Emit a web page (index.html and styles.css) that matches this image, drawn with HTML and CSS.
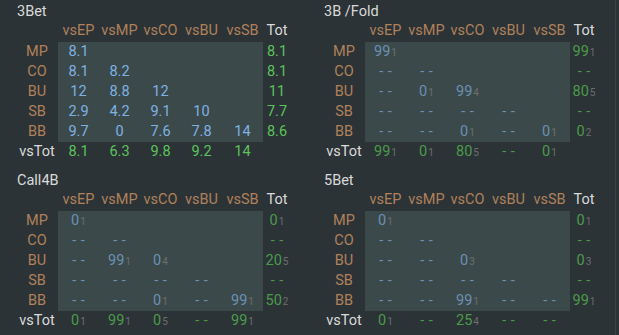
FILE: index.html
```html
<!DOCTYPE html>
<html>
<head>
<meta charset="utf-8">
<link rel="stylesheet" href="styles.css">
</head>
<body>
<div class="page">
  <div class="panels">
    <section class="panel hi">
      <div class="title">3Bet</div>
      <div class="grid">
        <div></div><div class="h">vsEP</div><div class="h">vsMP</div><div class="h">vsCO</div><div class="h">vsBU</div><div class="h">vsSB</div><div class="w">Tot</div>
        <div class="l">MP</div><div class="in b">8.1</div><div class="in"></div><div class="in"></div><div class="in"></div><div class="in"></div><div class="g">8.1</div>
        <div class="l">CO</div><div class="in b">8.1</div><div class="in b">8.2</div><div class="in"></div><div class="in"></div><div class="in"></div><div class="g">8.1</div>
        <div class="l">BU</div><div class="in b">12</div><div class="in b">8.8</div><div class="in b">12</div><div class="in"></div><div class="in"></div><div class="g">11</div>
        <div class="l">SB</div><div class="in b">2.9</div><div class="in b">4.2</div><div class="in b">9.1</div><div class="in b">10</div><div class="in"></div><div class="g">7.7</div>
        <div class="l">BB</div><div class="in b">9.7</div><div class="in b">0</div><div class="in b">7.6</div><div class="in b">7.8</div><div class="in b">14</div><div class="g">8.6</div>
        <div class="w">vsTot</div><div class="g">8.1</div><div class="g">6.3</div><div class="g">9.8</div><div class="g">9.2</div><div class="g">14</div><div></div>
      </div>
    </section>
    <section class="panel">
      <div class="title">3B /Fold</div>
      <div class="grid">
        <div></div><div class="h">vsEP</div><div class="h">vsMP</div><div class="h">vsCO</div><div class="h">vsBU</div><div class="h">vsSB</div><div class="w">Tot</div>
        <div class="l">MP</div><div class="in b">99<sub>1</sub></div><div class="in"></div><div class="in"></div><div class="in"></div><div class="in"></div><div class="g">99<sub>1</sub></div>
        <div class="l">CO</div><div class="in b d">--</div><div class="in b d">--</div><div class="in"></div><div class="in"></div><div class="in"></div><div class="g d">--</div>
        <div class="l">BU</div><div class="in b d">--</div><div class="in b">0<sub>1</sub></div><div class="in b">99<sub>4</sub></div><div class="in"></div><div class="in"></div><div class="g">80<sub>5</sub></div>
        <div class="l">SB</div><div class="in b d">--</div><div class="in b d">--</div><div class="in b d">--</div><div class="in b d">--</div><div class="in"></div><div class="g d">--</div>
        <div class="l">BB</div><div class="in b d">--</div><div class="in b d">--</div><div class="in b">0<sub>1</sub></div><div class="in b d">--</div><div class="in b">0<sub>1</sub></div><div class="g">0<sub>2</sub></div>
        <div class="w">vsTot</div><div class="g">99<sub>1</sub></div><div class="g">0<sub>1</sub></div><div class="g">80<sub>5</sub></div><div class="g d">--</div><div class="g">0<sub>1</sub></div><div></div>
      </div>
    </section>
    <section class="panel">
      <div class="title">Call4B</div>
      <div class="grid">
        <div></div><div class="h">vsEP</div><div class="h">vsMP</div><div class="h">vsCO</div><div class="h">vsBU</div><div class="h">vsSB</div><div class="w">Tot</div>
        <div class="l">MP</div><div class="in b">0<sub>1</sub></div><div class="in"></div><div class="in"></div><div class="in"></div><div class="in"></div><div class="g">0<sub>1</sub></div>
        <div class="l">CO</div><div class="in b d">--</div><div class="in b d">--</div><div class="in"></div><div class="in"></div><div class="in"></div><div class="g d">--</div>
        <div class="l">BU</div><div class="in b d">--</div><div class="in b">99<sub>1</sub></div><div class="in b">0<sub>4</sub></div><div class="in"></div><div class="in"></div><div class="g">20<sub>5</sub></div>
        <div class="l">SB</div><div class="in b d">--</div><div class="in b d">--</div><div class="in b d">--</div><div class="in b d">--</div><div class="in"></div><div class="g d">--</div>
        <div class="l">BB</div><div class="in b d">--</div><div class="in b d">--</div><div class="in b">0<sub>1</sub></div><div class="in b d">--</div><div class="in b">99<sub>1</sub></div><div class="g">50<sub>2</sub></div>
        <div class="w">vsTot</div><div class="g">0<sub>1</sub></div><div class="g">99<sub>1</sub></div><div class="g">0<sub>5</sub></div><div class="g d">--</div><div class="g">99<sub>1</sub></div><div></div>
      </div>
    </section>
    <section class="panel">
      <div class="title">5Bet</div>
      <div class="grid">
        <div></div><div class="h">vsEP</div><div class="h">vsMP</div><div class="h">vsCO</div><div class="h">vsBU</div><div class="h">vsSB</div><div class="w">Tot</div>
        <div class="l">MP</div><div class="in b">0<sub>1</sub></div><div class="in"></div><div class="in"></div><div class="in"></div><div class="in"></div><div class="g">0<sub>1</sub></div>
        <div class="l">CO</div><div class="in b d">--</div><div class="in b d">--</div><div class="in"></div><div class="in"></div><div class="in"></div><div class="g d">--</div>
        <div class="l">BU</div><div class="in b d">--</div><div class="in b d">--</div><div class="in b">0<sub>3</sub></div><div class="in"></div><div class="in"></div><div class="g">0<sub>3</sub></div>
        <div class="l">SB</div><div class="in b d">--</div><div class="in b d">--</div><div class="in b d">--</div><div class="in b d">--</div><div class="in"></div><div class="g d">--</div>
        <div class="l">BB</div><div class="in b d">--</div><div class="in b d">--</div><div class="in b">99<sub>1</sub></div><div class="in b d">--</div><div class="in b d">--</div><div class="g">99<sub>1</sub></div>
        <div class="w">vsTot</div><div class="g">0<sub>1</sub></div><div class="g d">--</div><div class="g">25<sub>4</sub></div><div class="g d">--</div><div class="g d">--</div><div></div>
      </div>
    </section>
  </div>
  <div class="edge"></div>
</div>
</body>
</html>
```

FILE: styles.css
```css
html, body {
  margin: 0;
  padding: 0;
  background: #2b3336;
  height: 100%;
  overflow: hidden;
}
.page {
  display: flex;
  height: 100%;
  font-family: Roboto, "Liberation Sans", sans-serif;
  font-size: 14.5px;
}
.panels {
  width: 614px;
  display: grid;
  grid-template-columns: 307px 307px;
  grid-auto-rows: 169px;
}
.edge {
  width: 1px;
  margin-left: 1px;
  background: #3a4447;
}
.panel {
  padding: 2px 0 0 16px;
}
.title {
  height: 20px;
  line-height: 20px;
  padding-left: 1px;
  color: #dadada;
}
.grid {
  display: grid;
  grid-template-columns: 42px repeat(5, 41px) 28px;
  grid-auto-rows: 20px;
  line-height: 20px;
  text-align: center;
  white-space: nowrap;
}
.grid > div:nth-child(-n+7) {
  height: 19px;
  line-height: 18px;
}
.h, .l {
  color: #b0815b;
}
.w {
  color: #dadada;
}
.in {
  background: #3c494b;
}
.b {
  color: #6a90b2;
}
.g {
  color: #4b9a4b;
}
.hi .b {
  color: #7eb2e2;
}
.hi .g {
  color: #5cc35c;
}
.d {
  letter-spacing: 4.5px;
  text-indent: 4.5px;
}
sub {
  font-size: 10px;
  vertical-align: baseline;
  color: #6e6e6e;
  margin-left: 1px;
}
```
